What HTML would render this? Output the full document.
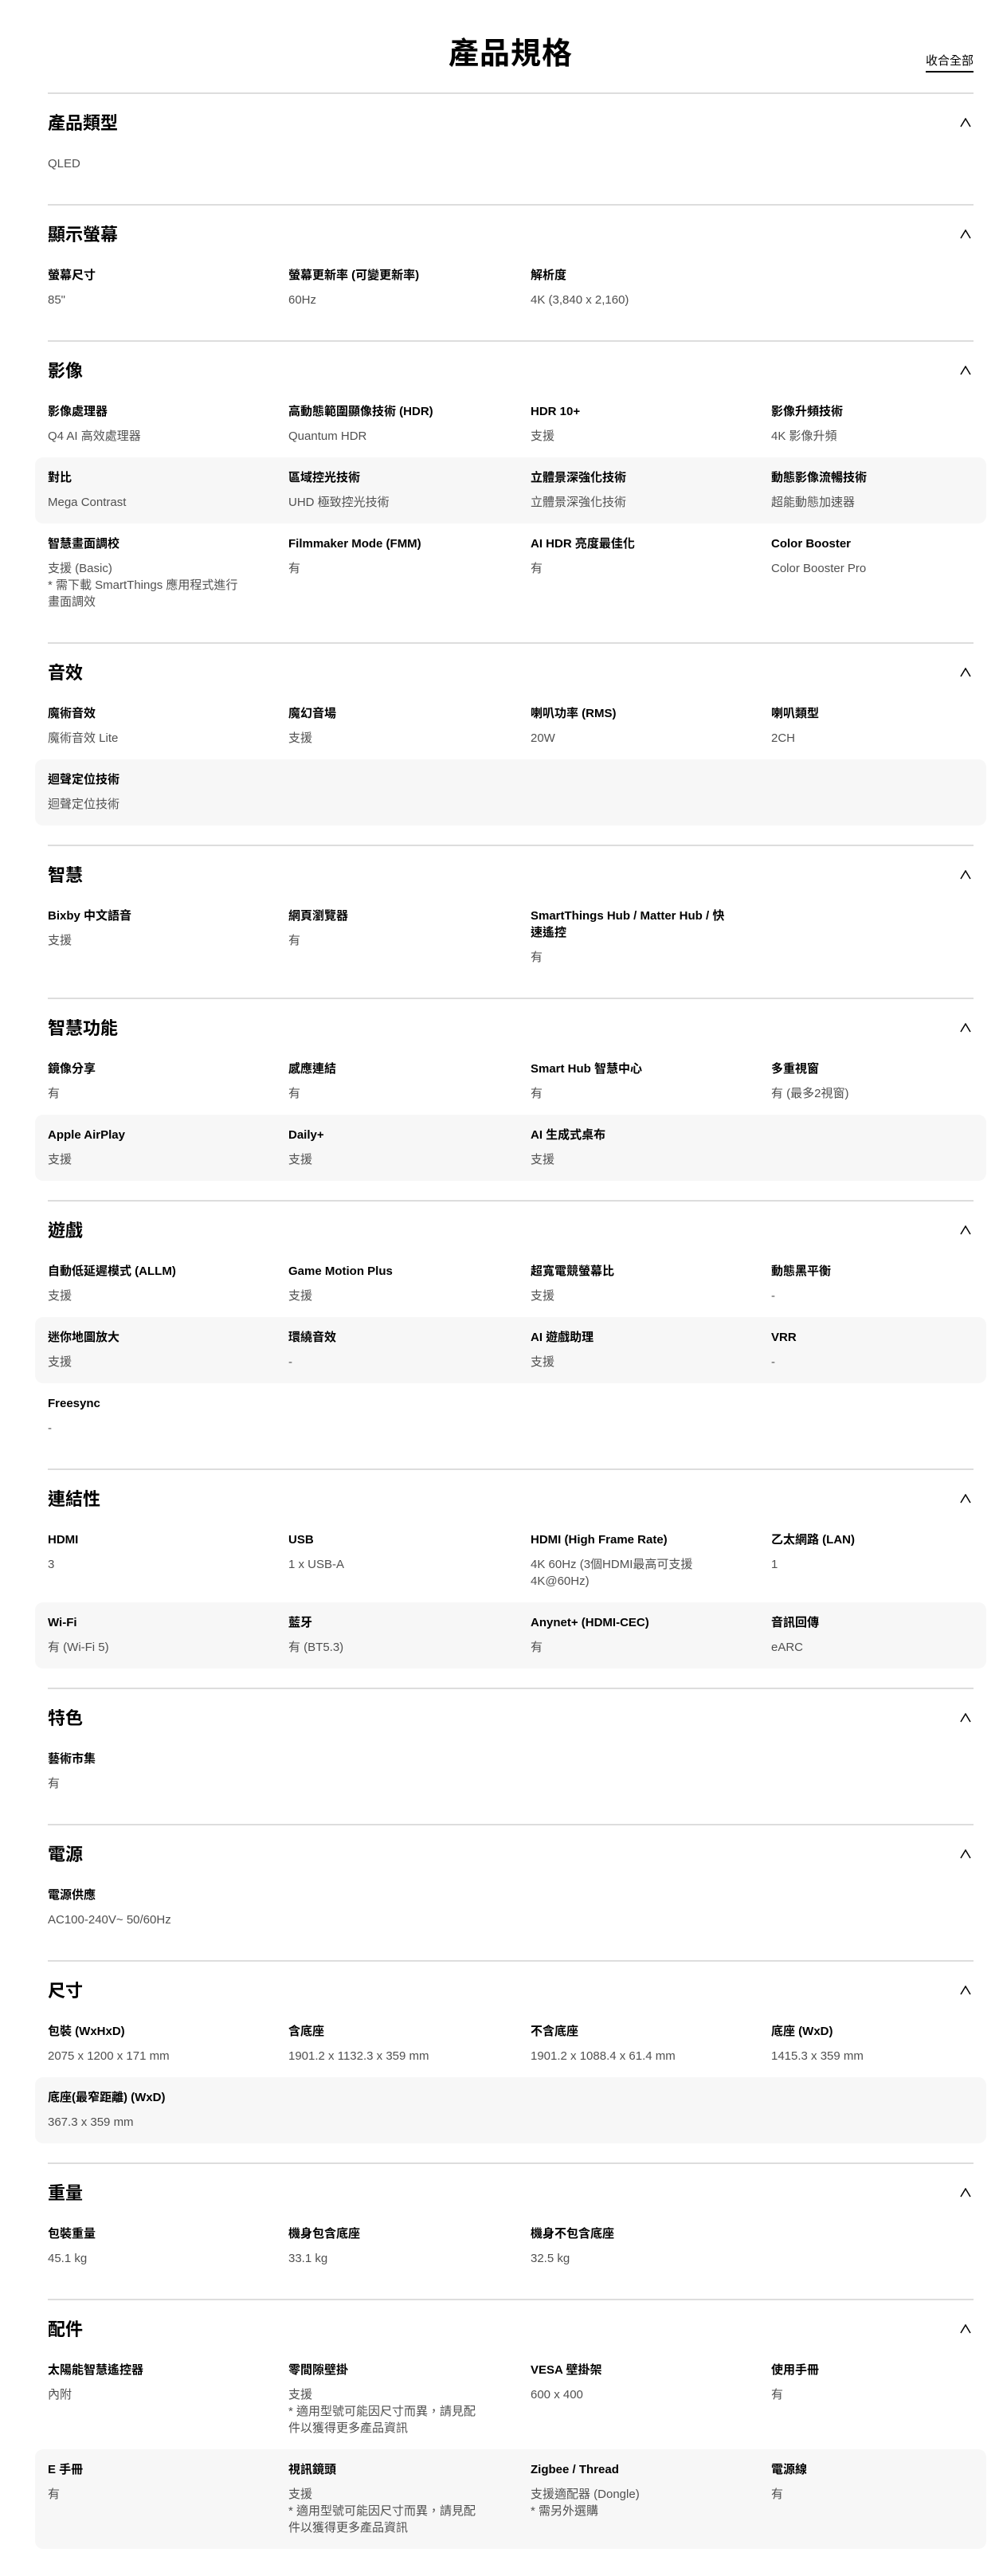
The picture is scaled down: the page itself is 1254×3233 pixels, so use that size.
<!DOCTYPE html>
<html><head><meta charset="utf-8">
<style>
*{box-sizing:border-box;margin:0;padding:0}
body{width:1254px;height:3233px;background:#fff;font-family:"Liberation Sans","Noto Sans CJK TC",sans-serif;color:#000;overflow:hidden}
.wrap{position:relative;margin-left:60px;width:1162px}
.top{height:116px;position:relative}
.top h1{position:absolute;left:0;right:0;top:44px;text-align:center;font-size:38px;line-height:48px;font-weight:700;letter-spacing:1px}
.top .ca{position:absolute;right:0;top:66px;font-size:15px;line-height:22px;border-bottom:2px solid #000;padding-bottom:1px}
.sec{border-top:2px solid #ddd;padding-bottom:24px}
.hd{position:relative;padding:22px 0 10px;font-size:22px;line-height:30px;font-weight:700}
.hd svg{position:absolute;right:3px;top:30px}
.row{display:grid;grid-template-columns:302px 304px 302px 1fr;padding:15px 0 16px}
.row.g{background:#f7f7f7;margin:0 -16px;padding:15px 16px 16px;border-radius:10px}
.l{font-size:15px;line-height:21px;font-weight:700;white-space:nowrap}
.v{font-size:15px;line-height:21px;color:#505050;margin-top:10px;white-space:nowrap}
.nv{margin-top:0}
</style></head><body>
<div class="wrap">
<div class="top"><h1>產品規格</h1><span class="ca">收合全部</span></div>

<div class="sec"><div class="hd">產品類型<svg width="14" height="12" viewBox="0 0 14 12"><path d="M1 11L7 1L13 11" fill="none" stroke="#000" stroke-width="1.5"/></svg></div>
<div class="row"><div><div class="v nv">QLED</div></div></div></div>

<div class="sec"><div class="hd">顯示螢幕<svg width="14" height="12" viewBox="0 0 14 12"><path d="M1 11L7 1L13 11" fill="none" stroke="#000" stroke-width="1.5"/></svg></div>
<div class="row"><div><div class="l">螢幕尺寸</div><div class="v">85"</div></div><div><div class="l">螢幕更新率 (可變更新率)</div><div class="v">60Hz</div></div><div><div class="l">解析度</div><div class="v">4K (3,840 x 2,160)</div></div></div></div>

<div class="sec"><div class="hd">影像<svg width="14" height="12" viewBox="0 0 14 12"><path d="M1 11L7 1L13 11" fill="none" stroke="#000" stroke-width="1.5"/></svg></div>
<div class="row"><div><div class="l">影像處理器</div><div class="v">Q4 AI 高效處理器</div></div><div><div class="l">高動態範圍顯像技術 (HDR)</div><div class="v">Quantum HDR</div></div><div><div class="l">HDR 10+</div><div class="v">支援</div></div><div><div class="l">影像升頻技術</div><div class="v">4K 影像升頻</div></div></div>
<div class="row g"><div><div class="l">對比</div><div class="v">Mega Contrast</div></div><div><div class="l">區域控光技術</div><div class="v">UHD 極致控光技術</div></div><div><div class="l">立體景深強化技術</div><div class="v">立體景深強化技術</div></div><div><div class="l">動態影像流暢技術</div><div class="v">超能動態加速器</div></div></div>
<div class="row"><div><div class="l">智慧畫面調校</div><div class="v">支援 (Basic)<br>* 需下載 SmartThings 應用程式進行<br>畫面調效</div></div><div><div class="l">Filmmaker Mode (FMM)</div><div class="v">有</div></div><div><div class="l">AI HDR 亮度最佳化</div><div class="v">有</div></div><div><div class="l">Color Booster</div><div class="v">Color Booster Pro</div></div></div></div>

<div class="sec"><div class="hd">音效<svg width="14" height="12" viewBox="0 0 14 12"><path d="M1 11L7 1L13 11" fill="none" stroke="#000" stroke-width="1.5"/></svg></div>
<div class="row"><div><div class="l">魔術音效</div><div class="v">魔術音效 Lite</div></div><div><div class="l">魔幻音場</div><div class="v">支援</div></div><div><div class="l">喇叭功率 (RMS)</div><div class="v">20W</div></div><div><div class="l">喇叭類型</div><div class="v">2CH</div></div></div>
<div class="row g"><div><div class="l">迴聲定位技術</div><div class="v">迴聲定位技術</div></div></div></div>

<div class="sec"><div class="hd">智慧<svg width="14" height="12" viewBox="0 0 14 12"><path d="M1 11L7 1L13 11" fill="none" stroke="#000" stroke-width="1.5"/></svg></div>
<div class="row"><div><div class="l">Bixby 中文語音</div><div class="v">支援</div></div><div><div class="l">網頁瀏覽器</div><div class="v">有</div></div><div><div class="l">SmartThings Hub / Matter Hub / 快<br>速遙控</div><div class="v">有</div></div></div></div>

<div class="sec"><div class="hd">智慧功能<svg width="14" height="12" viewBox="0 0 14 12"><path d="M1 11L7 1L13 11" fill="none" stroke="#000" stroke-width="1.5"/></svg></div>
<div class="row"><div><div class="l">鏡像分享</div><div class="v">有</div></div><div><div class="l">感應連結</div><div class="v">有</div></div><div><div class="l">Smart Hub 智慧中心</div><div class="v">有</div></div><div><div class="l">多重視窗</div><div class="v">有 (最多2視窗)</div></div></div>
<div class="row g"><div><div class="l">Apple AirPlay</div><div class="v">支援</div></div><div><div class="l">Daily+</div><div class="v">支援</div></div><div><div class="l">AI 生成式桌布</div><div class="v">支援</div></div></div></div>

<div class="sec"><div class="hd">遊戲<svg width="14" height="12" viewBox="0 0 14 12"><path d="M1 11L7 1L13 11" fill="none" stroke="#000" stroke-width="1.5"/></svg></div>
<div class="row"><div><div class="l">自動低延遲模式 (ALLM)</div><div class="v">支援</div></div><div><div class="l">Game Motion Plus</div><div class="v">支援</div></div><div><div class="l">超寬電競螢幕比</div><div class="v">支援</div></div><div><div class="l">動態黑平衡</div><div class="v">-</div></div></div>
<div class="row g"><div><div class="l">迷你地圖放大</div><div class="v">支援</div></div><div><div class="l">環繞音效</div><div class="v">-</div></div><div><div class="l">AI 遊戲助理</div><div class="v">支援</div></div><div><div class="l">VRR</div><div class="v">-</div></div></div>
<div class="row"><div><div class="l">Freesync</div><div class="v">-</div></div></div></div>

<div class="sec"><div class="hd">連結性<svg width="14" height="12" viewBox="0 0 14 12"><path d="M1 11L7 1L13 11" fill="none" stroke="#000" stroke-width="1.5"/></svg></div>
<div class="row"><div><div class="l">HDMI</div><div class="v">3</div></div><div><div class="l">USB</div><div class="v">1 x USB-A</div></div><div><div class="l">HDMI (High Frame Rate)</div><div class="v">4K 60Hz (3個HDMI最高可支援<br>4K@60Hz)</div></div><div><div class="l">乙太網路 (LAN)</div><div class="v">1</div></div></div>
<div class="row g"><div><div class="l">Wi-Fi</div><div class="v">有 (Wi-Fi 5)</div></div><div><div class="l">藍牙</div><div class="v">有 (BT5.3)</div></div><div><div class="l">Anynet+ (HDMI-CEC)</div><div class="v">有</div></div><div><div class="l">音訊回傳</div><div class="v">eARC</div></div></div></div>

<div class="sec"><div class="hd">特色<svg width="14" height="12" viewBox="0 0 14 12"><path d="M1 11L7 1L13 11" fill="none" stroke="#000" stroke-width="1.5"/></svg></div>
<div class="row"><div><div class="l">藝術市集</div><div class="v">有</div></div></div></div>

<div class="sec"><div class="hd">電源<svg width="14" height="12" viewBox="0 0 14 12"><path d="M1 11L7 1L13 11" fill="none" stroke="#000" stroke-width="1.5"/></svg></div>
<div class="row"><div><div class="l">電源供應</div><div class="v">AC100-240V~ 50/60Hz</div></div></div></div>

<div class="sec"><div class="hd">尺寸<svg width="14" height="12" viewBox="0 0 14 12"><path d="M1 11L7 1L13 11" fill="none" stroke="#000" stroke-width="1.5"/></svg></div>
<div class="row"><div><div class="l">包裝 (WxHxD)</div><div class="v">2075 x 1200 x 171 mm</div></div><div><div class="l">含底座</div><div class="v">1901.2 x 1132.3 x 359 mm</div></div><div><div class="l">不含底座</div><div class="v">1901.2 x 1088.4 x 61.4 mm</div></div><div><div class="l">底座 (WxD)</div><div class="v">1415.3 x 359 mm</div></div></div>
<div class="row g"><div><div class="l">底座(最窄距離) (WxD)</div><div class="v">367.3 x 359 mm</div></div></div></div>

<div class="sec"><div class="hd">重量<svg width="14" height="12" viewBox="0 0 14 12"><path d="M1 11L7 1L13 11" fill="none" stroke="#000" stroke-width="1.5"/></svg></div>
<div class="row"><div><div class="l">包裝重量</div><div class="v">45.1 kg</div></div><div><div class="l">機身包含底座</div><div class="v">33.1 kg</div></div><div><div class="l">機身不包含底座</div><div class="v">32.5 kg</div></div></div></div>

<div class="sec"><div class="hd">配件<svg width="14" height="12" viewBox="0 0 14 12"><path d="M1 11L7 1L13 11" fill="none" stroke="#000" stroke-width="1.5"/></svg></div>
<div class="row"><div><div class="l">太陽能智慧遙控器</div><div class="v">內附</div></div><div><div class="l">零間隙壁掛</div><div class="v">支援<br>* 適用型號可能因尺寸而異，請見配<br>件以獲得更多產品資訊</div></div><div><div class="l">VESA 壁掛架</div><div class="v">600 x 400</div></div><div><div class="l">使用手冊</div><div class="v">有</div></div></div>
<div class="row g"><div><div class="l">E 手冊</div><div class="v">有</div></div><div><div class="l">視訊鏡頭</div><div class="v">支援<br>* 適用型號可能因尺寸而異，請見配<br>件以獲得更多產品資訊</div></div><div><div class="l">Zigbee / Thread</div><div class="v">支援適配器 (Dongle)<br>* 需另外選購</div></div><div><div class="l">電源線</div><div class="v">有</div></div></div></div>
</div>
</body></html>
